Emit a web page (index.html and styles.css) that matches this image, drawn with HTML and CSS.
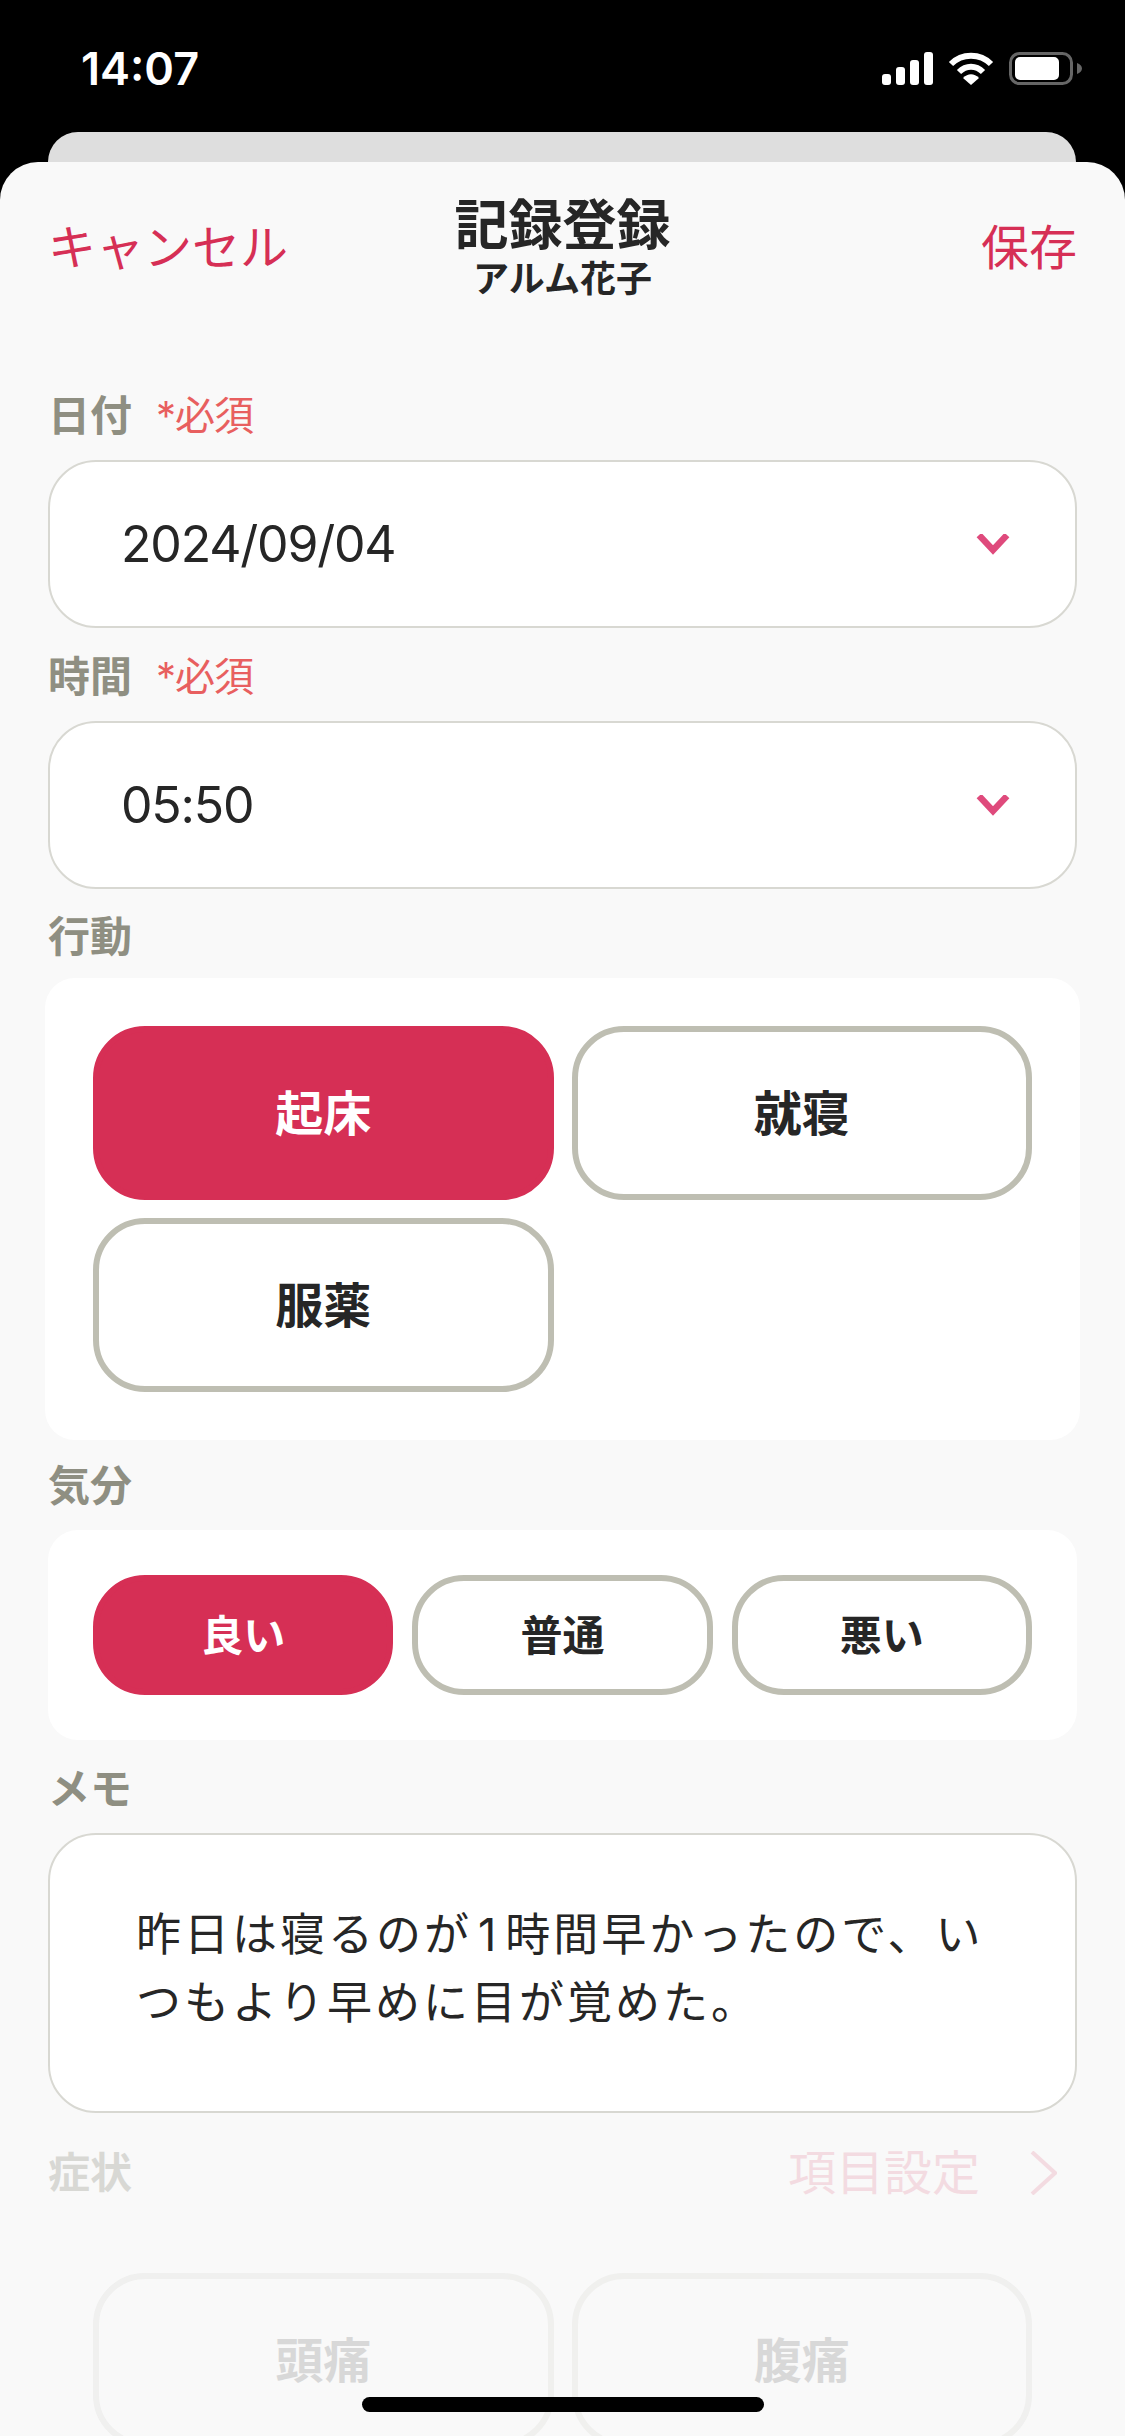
FILE: index.html
```html
<!DOCTYPE html>
<html lang="ja">
<head>
<meta charset="UTF-8" />
<meta name="viewport" content="width=device-width, initial-scale=1.0"/>
<title>記録登録</title>
<link rel="stylesheet" href="styles.css">
</head>
<body>

<div class="status-bar">
  <span class="clock">14:07</span>
  <div class="status-icons">
    <svg class="icon-signal" width="51" height="33" viewBox="0 0 51 33" fill="#fff">
      <rect x="0" y="22" width="9" height="11" rx="3"/>
      <rect x="14" y="15" width="9" height="18" rx="3"/>
      <rect x="28" y="8" width="9" height="25" rx="3"/>
      <rect x="42" y="0" width="9" height="33" rx="3"/>
    </svg>
    <svg class="icon-wifi" width="46" height="33" viewBox="0 0 46 33" fill="none" stroke="#fff" stroke-width="6">
      <path d="M3 12 C14 1 32 1 43 12"/>
      <path d="M11 20 C18 13 28 13 35 20"/>
      <path d="M23 33 L15 26 C20 21 26 21 31 26 Z" fill="#fff" stroke="none"/>
    </svg>
    <svg class="icon-battery" width="73" height="33" viewBox="0 0 73 33">
      <rect x="1.5" y="1.5" width="61" height="30" rx="9" fill="none" stroke="#666" stroke-width="3"/>
      <rect x="6" y="5" width="44" height="23" rx="5" fill="#fff"/>
      <path d="M68 11 C71 12 73 14 73 16.500 C73 19 71 21 68 22 Z" fill="#666"/>
    </svg>
  </div>
</div>

<div class="back-card"></div>

<div class="sheet">
  <div class="sheet-header">
    <span class="link cancel">キャンセル</span>
    <div class="heading">
      <h1>記録登録</h1>
      <p>アルム花子</p>
    </div>
    <span class="link save">保存</span>
  </div>

  <div class="label">日付<span class="required">*必須</span></div>
  <div class="select">
    <span>2024/09/04</span>
    <svg width="34" height="21" viewBox="0 0 34 21" fill="none" stroke="#df4a7c" stroke-width="6.500"><path d="M3 1 L17 16 L31 1"/></svg>
  </div>

  <div class="label">時間<span class="required">*必須</span></div>
  <div class="select">
    <span>05:50</span>
    <svg width="34" height="21" viewBox="0 0 34 21" fill="none" stroke="#df4a7c" stroke-width="6.500"><path d="M3 1 L17 16 L31 1"/></svg>
  </div>

  <div class="label label-tight">行動</div>
  <div class="panel panel-action">
    <button class="chip on">起床</button>
    <button class="chip">就寝</button>
    <button class="chip">服薬</button>
  </div>

  <div class="label">気分</div>
  <div class="panel panel-mood">
    <button class="chip on">良い</button>
    <button class="chip">普通</button>
    <button class="chip">悪い</button>
  </div>

  <div class="label">メモ</div>
  <div class="memo">昨日は寝るのが<span class="num">1</span>時間早かったので、い<br>つもより早めに目が覚めた。</div>

  <div class="symptom-head">
    <div class="label">症状</div>
    <div class="settings">
      <span>項目設定</span>
      <svg width="27" height="44" viewBox="0 0 27 44" fill="none" stroke="#d62f55" stroke-width="4"><path d="M2 1 L25 22 L2 43"/></svg>
    </div>
  </div>
  <div class="panel-action symptom-list">
    <button class="chip">頭痛</button>
    <button class="chip">腹痛</button>
  </div>
</div>

<div class="home-bar"></div>

</body>
</html>
```

FILE: styles.css
```css
:root {
  --primary: #d62f55;
  --sheet-bg: #f9f9f9;
  --text: #262626;
  --muted: #8f8f82;
  --border: #d8d8d2;
  --chip-border: #bebeb2;
}

* {
  box-sizing: border-box;
}

body {
  font-family: Inter, "Noto Sans CJK JP", sans-serif;
  background: #000;
  color: var(--text);
  width: 1125px;
  height: 2436px;
  margin: 0;
  overflow: hidden;
  position: relative;
}

.status-bar {
  height: 132px;
  padding: 48px 43px 0 81px;
  display: flex;
  justify-content: space-between;
  align-items: flex-start;
}
.clock {
  color: #fff;
  font-size: 45px;
  font-weight: 600;
  line-height: 42px;
}
.status-icons {
  display: flex;
  gap: 15px;
  margin-top: 4px;
}

.back-card {
  height: 30px;
  margin: 0 49px 0 48px;
  background: #dedede;
  border-radius: 30px 30px 0 0;
}

.sheet {
  height: 2274px;
  padding: 0 48px;
  background: var(--sheet-bg);
  border-radius: 38px 38px 0 0;
  overflow: hidden;
}
.sheet-header {
  display: grid;
  grid-template-columns: 1fr auto 1fr;
  align-items: center;
  padding: 34px 0 83px;
}
.link {
  margin-bottom: 12px;
  color: var(--primary);
  font-size: 48px;
}
.save {
  text-align: right;
}
.heading {
  text-align: center;
}
.heading h1 {
  margin: 0;
  font-size: 54px;
  font-weight: 700;
  line-height: 60px;
}
.heading p {
  margin: -1px 0 0;
  font-size: 36px;
  font-weight: 700;
  line-height: 48px;
}

.label {
  height: 60px;
  margin-bottom: 14px;
  color: var(--muted);
  font-size: 42px;
  font-weight: 700;
  line-height: 60px;
}
.label-tight {
  margin-bottom: 11px;
}
.required {
  margin-left: 24px;
  color: #e85f5f;
  font-size: 40px;
  font-weight: 400;
  letter-spacing: -1px;
  vertical-align: 1px;
}

.select {
  height: 168px;
  margin-bottom: 19px;
  padding: 0 65px 0 71px;
  display: flex;
  justify-content: space-between;
  align-items: center;
  background: #fff;
  border: 2px solid var(--border);
  border-radius: 48px;
  font-size: 50px;
  letter-spacing: -1.200px;
}
.select + .label-tight {
  margin-top: -1px;
}

.panel {
  background: #fff;
  border-radius: 30px;
}
.panel-action {
  display: grid;
  grid-template-columns: 1fr 1fr;
  gap: 18px;
}
.panel.panel-action {
  margin: 0 -3px 16px;
  padding: 48px;
}
.panel-action .chip {
  height: 174px;
  font-size: 48px;
}
.panel-mood {
  margin-bottom: 19px;
  padding: 45px;
  display: grid;
  grid-template-columns: repeat(3, 1fr);
  gap: 19px;
}
.panel-mood .chip {
  height: 120px;
  font-size: 42px;
}

.chip {
  padding: 0 0 6px;
  background: #fff;
  border: 6px solid var(--chip-border);
  border-radius: 52px;
  color: var(--text);
  font-family: inherit;
  font-weight: 700;
}
.chip.on {
  background: var(--primary);
  border-color: var(--primary);
  color: #fff;
}

.memo {
  height: 280px;
  padding: 66px 86px 0;
  background: #fff;
  border: 2px solid var(--border);
  border-radius: 48px;
  font-size: 45px;
  letter-spacing: 3px;
  line-height: 68px;
}
.num {
  padding: 0 6px;
}

.symptom-head {
  margin-top: 30px;
  display: flex;
  justify-content: space-between;
  align-items: center;
}
.symptom-head .label {
  margin: 0;
  opacity: 0.3;
}
.settings {
  display: flex;
  align-items: center;
  gap: 50px;
  margin-right: 20px;
  color: var(--primary);
  font-size: 48px;
  line-height: 60px;
  opacity: 0.14;
}
.symptom-list {
  margin-top: 70px;
  padding: 0 45px;
  opacity: 0.15;
}
.symptom-list .chip {
  background: transparent;
}

.home-bar {
  position: absolute;
  left: 362px;
  top: 2397px;
  width: 402px;
  height: 15px;
  background: #000;
  border-radius: 8px;
}
```
